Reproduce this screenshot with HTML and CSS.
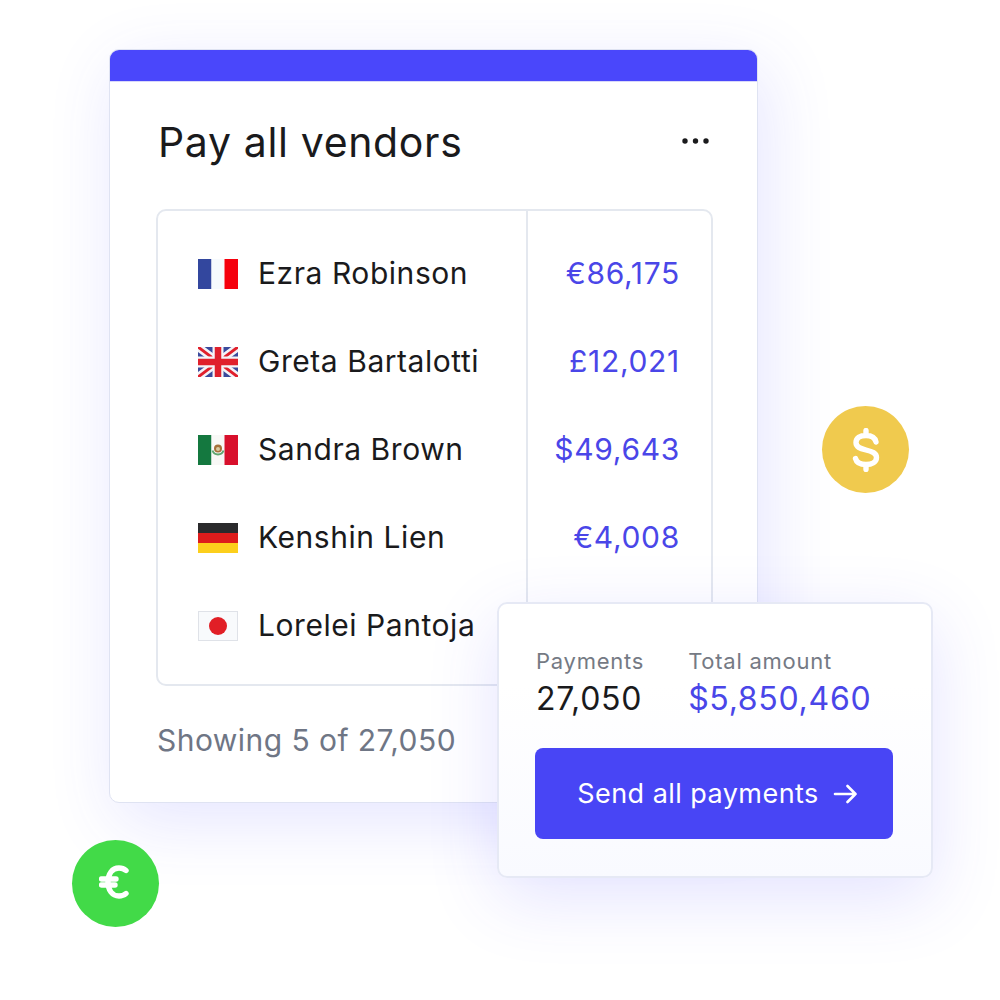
FILE: index.html
```html
<!DOCTYPE html>
<html lang="en">
<head>
<meta charset="utf-8">
<title>Pay all vendors</title>
<link rel="stylesheet" href="styles.css">
</head>
<body>
<main class="stage">
  <section class="card">
    <div class="card-bar"></div>
    <div class="card-body">
      <header class="card-head">
        <h1 class="title">Pay all vendors</h1>
        <svg class="more" viewBox="0 0 27 6" width="27" height="6" aria-hidden="true"><circle cx="3" cy="3" r="2.7"/><circle cx="13.5" cy="3" r="2.7"/><circle cx="24" cy="3" r="2.7"/></svg>
      </header>
      <div class="table">
        <div class="names">
          <div class="row">
            <svg class="flag" viewBox="0 0 40 30"><rect width="13.5" height="30" fill="#33479e"/><rect x="13.5" width="13" height="30" fill="#f6fafd"/><rect x="26.5" width="13.5" height="30" fill="#f5000d"/></svg>
            <span>Ezra Robinson</span>
          </div>
          <div class="row">
            <svg class="flag" viewBox="0 0 40 30"><rect width="40" height="30" fill="#3a4a9c"/><path d="M0 0L40 30M40 0L0 30" stroke="#f4f4f8" stroke-width="8"/><path d="M0 0L40 30M40 0L0 30" stroke="#e0202c" stroke-width="3"/><path d="M20 0V30M0 15H40" stroke="#f4f4f8" stroke-width="11"/><path d="M20 0V30M0 15H40" stroke="#e0202c" stroke-width="6.5"/></svg>
            <span>Greta Bartalotti</span>
          </div>
          <div class="row">
            <svg class="flag" viewBox="0 0 40 30"><rect width="13.5" height="30" fill="#14783f"/><rect x="13.5" width="13" height="30" fill="#f8f8f6"/><rect x="26.5" width="13.5" height="30" fill="#d8102c"/><circle cx="20" cy="13.5" r="4" fill="#a5703a"/><circle cx="20" cy="14" r="2" fill="#d9c9a0"/><path d="M14.5 15.5a5.8 5.8 0 0 0 11 0" fill="none" stroke="#5fa56f" stroke-width="2"/></svg>
            <span>Sandra Brown</span>
          </div>
          <div class="row">
            <svg class="flag" viewBox="0 0 40 30"><rect width="40" height="10" fill="#2a2a2c"/><rect y="10" width="40" height="10" fill="#dd1c1c"/><rect y="20" width="40" height="10" fill="#fccf1c"/></svg>
            <span>Kenshin Lien</span>
          </div>
          <div class="row">
            <svg class="flag" viewBox="0 0 40 30"><rect x=".5" y=".5" width="39" height="29" fill="#f8fafc" stroke="#dfe2e8"/><circle cx="20" cy="15" r="9" fill="#e11f26"/></svg>
            <span>Lorelei Pantoja</span>
          </div>
        </div>
        <div class="amounts">
          <div class="amount">€86,175</div>
          <div class="amount">£12,021</div>
          <div class="amount">$49,643</div>
          <div class="amount">€4,008</div>
          <div class="amount"></div>
        </div>
      </div>
      <p class="showing">Showing 5 of 27,050</p>
    </div>
  </section>

  <section class="summary">
    <div class="stats">
      <div class="stat">
        <div class="stat-label">Payments</div>
        <div class="stat-value">27,050</div>
      </div>
      <div class="stat">
        <div class="stat-label">Total amount</div>
        <div class="stat-value accent">$5,850,460</div>
      </div>
    </div>
    <div class="send">
      <span>Send all payments</span>
      <svg class="arrow" viewBox="0 0 24 24" width="24" height="24" aria-hidden="true"><path d="M2 12H22.5M14.5 4L22.5 12L14.5 20"/></svg>
    </div>
  </section>

  <div class="coin coin-dollar">
    <svg viewBox="0 0 30 44" width="30" height="44" aria-hidden="true"><path d="M15 2.5V7.5M15 36.5V41.5M25 14C24 9.5 20 7.5 15 7.5C9 7.5 5 10 5 14.5C5 19 9 20.5 15 22C21 23.5 25.5 25 25.5 29.5C25.5 34 21 36.5 15 36.5C9 36.5 5.5 34.5 4.5 30.5"/></svg>
  </div>
  <div class="coin coin-euro">
    <svg viewBox="0 0 30 34" width="30" height="34" aria-hidden="true"><path d="M27 5.5C25 3.8 22.5 3 20 3C13 3 9 9 9 17C9 25 13 31 20 31C22.5 31 25 30.2 27 28.5M2.5 14H17M2.5 20H16"/></svg>
  </div>
</main>
</body>
</html>
```

FILE: styles.css
```css
* { box-sizing: border-box; }
html, body { margin: 0; padding: 0; background: #fff; }
body { font-family: Inter, "Liberation Sans", sans-serif; color: #1a1a1c; font-optical-sizing: none; }

.stage {
  position: relative;
  width: 1000px;
  height: 1000px;
  padding: 49px 0 0 109px;
  overflow: hidden;
}

.card {
  width: 649px;
  height: 754px;
  border: 1px solid #dfe3f2;
  border-radius: 10px;
  background: #fff;
  overflow: hidden;
  box-shadow: 8px 18px 70px rgba(74, 70, 255, .14);
}
.card-bar { height: 32px; background: #4a47fb; border-bottom: 1px solid #d8d8fa; }
.card-body { padding: 0 44px 0 46px; }
.card-head {
  display: flex;
  align-items: center;
  justify-content: space-between;
  height: 127px;
  padding: 0 4px 8px 2px;
}
.title { margin: 0; font-size: 41px; font-weight: 400; line-height: 48px; letter-spacing: .65px; }
.more { fill: #1a1a1c; margin-bottom: 2px; }

.table {
  display: grid;
  grid-template-columns: 368px 1fr;
  width: 557px;
  height: 477px;
  border: 2px solid #e4e8ef;
  border-radius: 10px;
  background: #fff;
}
.names { padding: 18px 0 0 40px; }
.amounts { padding-top: 18px; border-left: 2px solid #e4e8ef; }
.row { display: flex; align-items: center; gap: 20px; height: 88px; font-size: 30px; letter-spacing: .55px; }
.flag { width: 40px; height: 30px; flex: none; margin-top: 2px; }
.amount {
  display: flex;
  align-items: center;
  justify-content: flex-end;
  height: 88px;
  padding-right: 31px;
  font-size: 30px;
  letter-spacing: .7px;
  color: #4a46e8;
}

.showing { margin: 34px 0 0 1px; font-size: 30px; line-height: 40px; letter-spacing: .45px; color: #6f7685; }

.summary {
  position: absolute;
  left: 497px;
  top: 602px;
  width: 436px;
  height: 276px;
  padding: 43px 38px 0 36px;
  border: 2px solid #e6e9f5;
  border-radius: 10px;
  background: linear-gradient(#fff 30%, #f9faff);
  box-shadow: 0 20px 70px rgba(74, 70, 255, .15);
}
.stats { display: flex; gap: 44px; padding-left: 1px; }
.stat-label { font-size: 22px; line-height: 28px; letter-spacing: .75px; color: #757a84; }
.stat-value { font-size: 32px; line-height: 44px; margin-top: 2px; letter-spacing: .7px; }
.accent { color: #4a46e8; }

.send {
  display: flex;
  align-items: center;
  justify-content: center;
  gap: 14px;
  height: 91px;
  margin-top: 27px;
  padding-left: 6px;
  border-radius: 8px;
  background: #4845f5;
  color: #fff;
  font-size: 27px;
  letter-spacing: .45px;
}
.arrow { fill: none; stroke: #fff; stroke-width: 2.6; stroke-linecap: round; stroke-linejoin: round; }

.coin {
  position: absolute;
  display: flex;
  align-items: center;
  justify-content: center;
  width: 87px;
  height: 87px;
  border-radius: 50%;
}
.coin svg { fill: none; stroke: #fff; stroke-width: 5.4; stroke-linecap: round; stroke-linejoin: round; }
.coin-dollar { left: 822px; top: 406px; background: #f0ca4e; }
.coin-euro { left: 72px; top: 840px; background: #42da48; }
.coin-euro svg { margin: 0 3px 3px 0; }
```
